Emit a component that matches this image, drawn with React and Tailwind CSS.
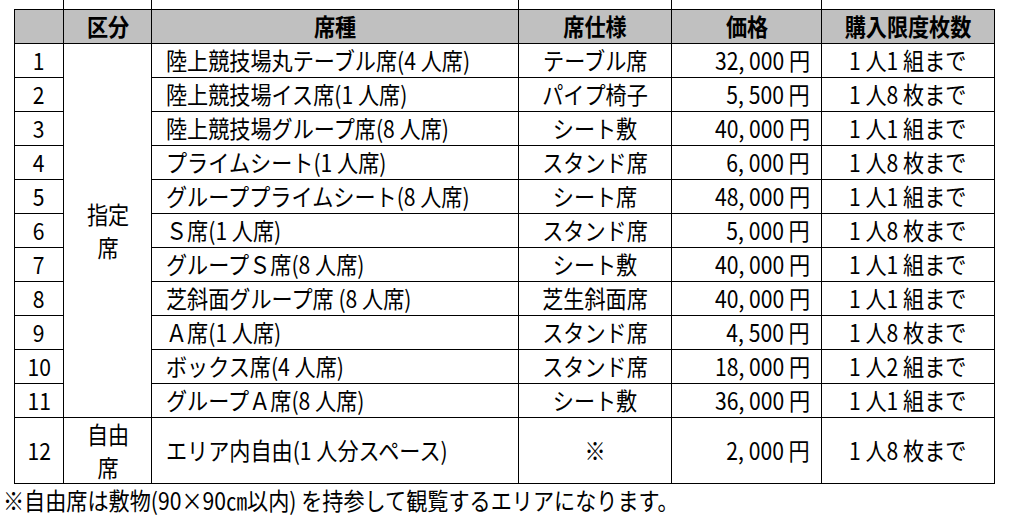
import React from "react";

const rows = [
  ["1", "陸上競技場丸テーブル席(4 人席)", "テーブル席", "32, 000 円", "1 人1 組まで"],
  ["2", "陸上競技場イス席(1 人席)", "パイプ椅子", "5, 500 円", "1 人8 枚まで"],
  ["3", "陸上競技場グループ席(8 人席)", "シート敷", "40, 000 円", "1 人1 組まで"],
  ["4", "プライムシート(1 人席)", "スタンド席", "6, 000 円", "1 人8 枚まで"],
  ["5", "グループプライムシート(8 人席)", "シート席", "48, 000 円", "1 人1 組まで"],
  ["6", "Ｓ席(1 人席)", "スタンド席", "5, 000 円", "1 人8 枚まで"],
  ["7", "グループＳ席(8 人席)", "シート敷", "40, 000 円", "1 人1 組まで"],
  ["8", "芝斜面グループ席 (8 人席)", "芝生斜面席", "40, 000 円", "1 人1 組まで"],
  ["9", "Ａ席(1 人席)", "スタンド席", "4, 500 円", "1 人8 枚まで"],
  ["10", "ボックス席(4 人席)", "スタンド席", "18, 000 円", "1 人2 組まで"],
  ["11", "グループＡ席(8 人席)", "シート敷", "36, 000 円", "1 人1 組まで"],
];

const cell = "border border-black p-0 align-middle whitespace-nowrap";

function C({ children }) {
  return <span className="inline-block scale-x-[0.88] origin-center">{children}</span>;
}
function L({ children }) {
  return <span className="inline-block scale-x-[0.88] origin-left">{children}</span>;
}
function R({ children }) {
  return <span className="inline-block scale-x-[0.88] origin-right">{children}</span>;
}

function Stack({ top, bottom }) {
  return (
    <div className="flex flex-col items-center gap-[9px] leading-[24px]">
      <C>{top}</C>
      <C>{bottom}</C>
    </div>
  );
}

export default function App() {
  return (
    <div
      className="w-[1009px] h-[526px] bg-white text-black overflow-hidden"
      style={{ fontFamily: '"Noto Sans CJK JP", "Noto Sans", sans-serif' }}
    >
      <table className="ml-[14px] border-collapse table-fixed text-[24px] leading-none">
        <colgroup>
          <col className="w-[49px]" />
          <col className="w-[88px]" />
          <col className="w-[367px]" />
          <col className="w-[153px]" />
          <col className="w-[150px]" />
          <col className="w-[173px]" />
        </colgroup>
        <tbody>
          <tr className="h-[9px]">
            <td className="p-0"></td>
            <td className="p-0 border-l border-black"></td>
            <td className="p-0 border-l border-black"></td>
            <td className="p-0 border-l border-black"></td>
            <td className="p-0 border-l border-black"></td>
            <td className="p-0 border-l border-black"></td>
          </tr>
          <tr className="h-[34px] bg-[#c0c0c0] font-bold">
            <td className={cell}></td>
            <td className={`${cell} text-center`}><C>区分</C></td>
            <td className={`${cell} text-center`}><C>席種</C></td>
            <td className={`${cell} text-center`}><C>席仕様</C></td>
            <td className={`${cell} text-center`}><C>価格</C></td>
            <td className={`${cell} text-center`}><C>購入限度枚数</C></td>
          </tr>
          {rows.map((r, i) => (
            <tr key={r[0]} className="h-[34px]">
              <td className={`${cell} text-center`}><C>{r[0]}</C></td>
              {i === 0 && (
                <td rowSpan={11} className={`${cell} text-center`}>
                  <Stack top="指定" bottom="席" />
                </td>
              )}
              <td className={`${cell} pl-[14px]`}><L>{r[1]}</L></td>
              <td className={`${cell} text-center`}><C>{r[2]}</C></td>
              <td className={`${cell} text-right pr-[11px]`}><R>{r[3]}</R></td>
              <td className={`${cell} text-center`}><C>{r[4]}</C></td>
            </tr>
          ))}
          <tr className="h-[66px]">
            <td className={`${cell} text-center`}><C>12</C></td>
            <td className={`${cell} text-center`}>
              <Stack top="自由" bottom="席" />
            </td>
            <td className={`${cell} pl-[14px]`}><L>エリア内自由(1 人分スペース)</L></td>
            <td className={`${cell} text-center`}><C>※</C></td>
            <td className={`${cell} text-right pr-[11px]`}><R>2, 000 円</R></td>
            <td className={`${cell} text-center`}><C>1 人8 枚まで</C></td>
          </tr>
        </tbody>
      </table>
      <p className="pl-[3px] pt-[4px] text-[24px] leading-none whitespace-nowrap">
        <L>※自由席は敷物(90×90㎝以内) を持参して観覧するエリアになります。</L>
      </p>
    </div>
  );
}
